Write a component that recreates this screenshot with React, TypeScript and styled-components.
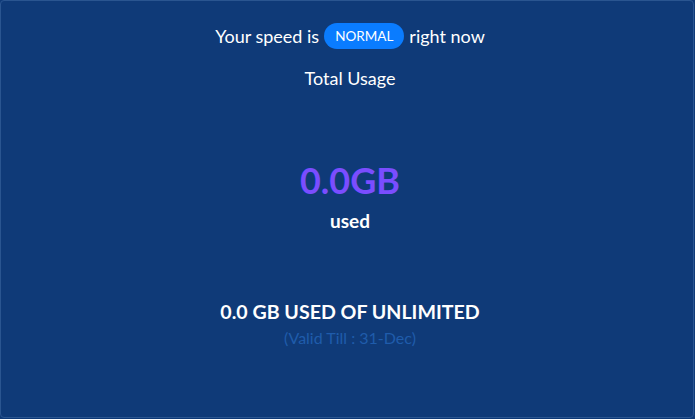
import React from 'react';
import styled, { createGlobalStyle } from 'styled-components';

const GlobalStyle = createGlobalStyle`
  html, body {
    margin: 0;
    padding: 0;
    background: #0f3a78;
  }
  body {
    font-family: Lato, 'Noto Sans', sans-serif;
  }
`;

const Card = styled.div`
  box-sizing: border-box;
  width: 694px;
  height: 418px;
  margin: 0;
  background: #0f3a78;
  border: 1px solid #2a5590;
  border-radius: 4px;
  display: flex;
  flex-direction: column;
  align-items: center;
  padding: 21px 0 0 6px;
  color: #ffffff;
`;

const SpeedLine = styled.div`
  display: flex;
  align-items: center;
  gap: 5px;
  font-size: 18px;
  line-height: 28px;
`;

const Pill = styled.span`
  background: #0a7cff;
  color: #ffffff;
  font-size: 13.5px;
  border-radius: 14px;
  padding: 0 11px;
  line-height: 26px;
  height: 26px;
`;

const Heading = styled.div`
  margin-top: 17px;
  font-size: 18px;
  line-height: 22px;
`;

const Amount = styled.div`
  margin-top: 71px;
  font-size: 36px;
  font-weight: 700;
  line-height: 40px;
  color: #7a4dff;
`;

const AmountLabel = styled.div`
  margin-top: 9px;
  font-size: 19px;
  font-weight: 700;
  line-height: 24px;
`;

const Summary = styled.div`
  margin-top: 67px;
  font-size: 19.6px;
  font-weight: 700;
  line-height: 24px;
`;

const Validity = styled.div`
  margin-top: 4px;
  font-size: 16px;
  line-height: 20px;
  color: #1f5cab;
`;

export default function App() {
  return (
    <>
      <GlobalStyle />
      <Card>
        <SpeedLine>
          <span>Your speed is</span>
          <Pill>NORMAL</Pill>
          <span>right now</span>
        </SpeedLine>
        <Heading>Total Usage</Heading>
        <Amount>0.0GB</Amount>
        <AmountLabel>used</AmountLabel>
        <Summary>0.0 GB USED OF UNLIMITED</Summary>
        <Validity>(Valid Till : 31-Dec)</Validity>
      </Card>
    </>
  );
}
